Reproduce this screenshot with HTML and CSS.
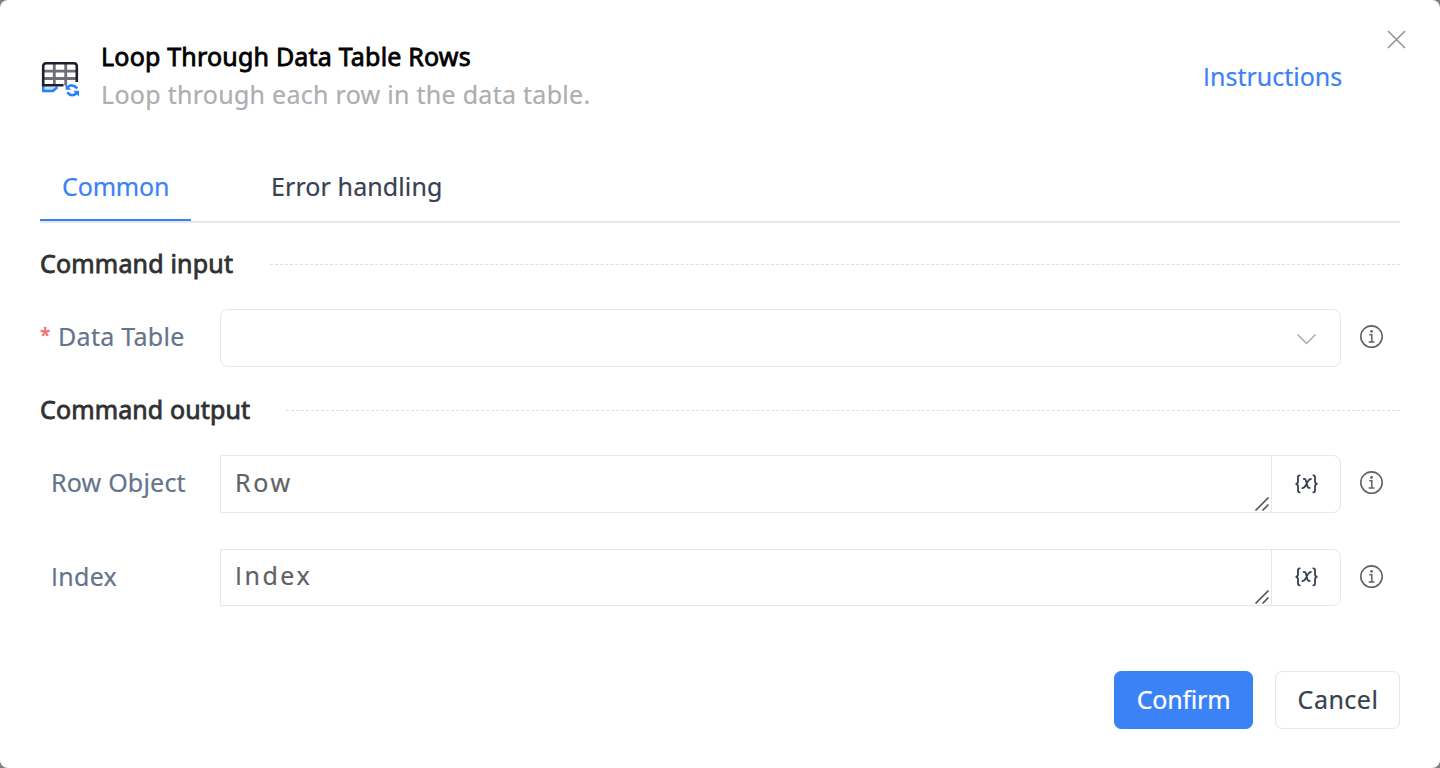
FILE: index.html
```html
<!DOCTYPE html>
<html lang="en">
<head>
<meta charset="utf-8">
<title>Loop Through Data Table Rows</title>
<link rel="stylesheet" href="styles.css">
</head>
<body>
<svg class="defs" width="0" height="0">
  <symbol id="info" viewBox="0 0 24 24"><circle cx="11.5" cy="11.6" r="10.7" fill="none" stroke="#606266" stroke-width="1.6"/><circle cx="11.5" cy="6.4" r="1.4" fill="#606266"/><path d="M9.3 9.8h2.5v7M8.7 16.9h5.8" fill="none" stroke="#606266" stroke-width="1.5"/></symbol>
  <symbol id="var" viewBox="0 0 24 20"><g fill="none" stroke="#374151" stroke-width="1.8"><path d="M6.4 1.3H5.6Q4 1.3 4 3V7.3Q4 9.6 1.6 9.8Q4 10 4 12.3V16.6Q4 18.3 5.6 18.3H6.4"/><path d="M18.6 1.3h.8Q21 1.3 21 3V7.3Q21 9.6 23.4 9.8Q21 10 21 12.3V16.6Q21 18.3 19.4 18.3H18.6"/><path d="M9 5.2Q11.2 4.3 12 6.7L13.3 12Q14 14.8 16.4 13.6M17.6 5.1Q15.4 4.6 13.8 7.4L11.5 11.8Q9.9 14.7 7.7 13.9"/></g></symbol>
  <symbol id="grip" viewBox="0 0 16 16"><path d="M1.5 14.5L14.5 1.5M8.5 14.5L14.5 8.5" fill="none" stroke="#505050" stroke-width="1.6"/></symbol>
</svg>
<main class="dialog">
  <header class="header">
    <svg class="logo" viewBox="0 0 40 40">
      <path d="M3.2 27V32H13L17.5 28" fill="#b9dcff" stroke="#2680ff" stroke-width="2.4"/>
      <path d="M3 12.2H37M3 19.5H37M14.3 5V26.5M25.7 5V26.5" stroke="#716d78" stroke-width="2.8" fill="none"/>
      <path d="M23.5 26.3H3.2V7.3Q3.2 4.3 6.2 4.3H33.8Q36.8 4.3 36.8 7.3V23" fill="none" stroke="#201d2e" stroke-width="2.6"/>
      <path d="M27.5 28.2Q32.5 24 37.3 29.4M37 33.8Q32 38.9 27.3 33.4" fill="none" stroke="#2680ff" stroke-width="2.7"/>
      <path d="M25.6 25.2V30.8H31.2ZM39 37.6V31.8H33.2Z" fill="#2680ff"/>
    </svg>
    <div class="heading">
      <h1 class="title">Loop Through Data Table Rows</h1>
      <p class="subtitle">Loop through each row in the data table.</p>
    </div>
    <a class="instructions">Instructions</a>
    <svg class="close" viewBox="0 0 20 20"><path d="M2 2L19 19M19 2L2 19" stroke="#909399" stroke-width="1.6"/></svg>
  </header>
  <nav class="tabs">
    <div class="tab active"><span class="t-common">Common</span></div>
    <div class="tab"><span class="t-error">Error handling</span></div>
  </nav>
  <section class="group">
    <h2 class="legend first"><span class="t-legend">Command input</span><i class="rule"></i></h2>
    <div class="row">
      <label class="label"><b class="star">*</b><span class="t-data">Data Table</span></label>
      <div class="field select"><svg class="chevron" viewBox="0 0 20 12"><path d="M.5 1.5L9.5 10.5L18.5 1.5" fill="none" stroke="#a8abb2" stroke-width="1.5"/></svg></div>
      <svg class="info"><use href="#info"/></svg>
    </div>
  </section>
  <section class="group">
    <h2 class="legend"><span class="t-legend">Command output</span><i class="rule"></i></h2>
    <div class="row">
      <label class="label indent"><span class="t-row">Row Object</span></label>
      <div class="field"><div class="text"><span class="v-row">Row</span><svg class="grip"><use href="#grip"/></svg></div><div class="addon"><svg class="var"><use href="#var"/></svg></div></div>
      <svg class="info"><use href="#info"/></svg>
    </div>
    <div class="row second">
      <label class="label indent"><span class="t-index">Index</span></label>
      <div class="field"><div class="text"><span class="v-index">Index</span><svg class="grip"><use href="#grip"/></svg></div><div class="addon"><svg class="var"><use href="#var"/></svg></div></div>
      <svg class="info"><use href="#info"/></svg>
    </div>
  </section>
  <footer class="footer">
    <button class="btn primary">Confirm</button>
    <button class="btn cancel">Cancel</button>
  </footer>
</main>
</body>
</html>
```

FILE: styles.css
```css
* { box-sizing: border-box; }
body { margin: 0; background: #7f7f7f; font-family: "Noto Sans", sans-serif; font-size: 25px; line-height: 36px; color: #374151; -webkit-text-stroke: 0.2px; }
svg { display: block; flex: none; }
.defs { position: absolute; }
h1, h2, p { margin: 0; font-size: 25px; font-weight: 400; white-space: nowrap; }
.dialog { width: 1440px; height: 768px; padding: 0 40px; background: #fff; border-radius: 8px; display: flex; flex-direction: column; }
.header { height: 154px; flex: none; display: flex; align-items: flex-start; }
.logo { width: 40px; height: 40px; margin-top: 59px; }
.heading { margin: 38px 0 0 21px; width: 1102px; }
.title { color: #000; -webkit-text-stroke: 0.8px #000; height: 38px; letter-spacing: 0.2px; }
.subtitle { color: #adadb3; letter-spacing: 0.28px; }
.instructions { color: #3b82f6; margin-top: 58px; width: 184px; }
/* plain capital I, without slab serifs */
.instructions::first-letter, .t-index::first-letter, .v-index::first-letter { font-family: "Open Sans", sans-serif; }
.t-index, .v-index { display: block; }
.close { width: 20px; height: 20px; margin: 29px -6px 0 -1px; }
.tabs { height: 69px; flex: none; display: flex; gap: 58px; border-bottom: 2px solid #e4e7ed; }
.tab { height: 67px; padding: 14px 22px 0; white-space: nowrap; }
.active { color: #3b82f6; width: 151px; border-bottom: 2px solid #3b82f6; }
.t-common { letter-spacing: -0.15px; }
.t-error { letter-spacing: 0.1px; }
.group { flex: none; }
.legend { height: 88px; padding-bottom: 2px; display: flex; align-items: center; gap: 36px; color: #303133; -webkit-text-stroke: 0.8px #303133; }
.first { height: 86px; padding-bottom: 3px; gap: 37px; }
.t-legend { letter-spacing: 0.12px; padding-bottom: 2px; }
.first .t-legend { padding-bottom: 3px; letter-spacing: 0.18px; }
.rule { flex: 1; height: 0; border-top: 1px dashed #dcdfe6; }
.row { display: flex; height: 58px; align-items: center; }
.second { margin-top: 36px; height: 57px; }
.label { width: 180px; display: flex; padding-bottom: 5px; color: #64748b; white-space: nowrap; }
.star { width: 18px; margin-top: -1px; color: #f56c6c; font-weight: 600; font-size: 19px; }
.indent { padding: 0 0 4px 11px; }
.t-data { letter-spacing: 0.3px; }
.t-row { letter-spacing: 0.2px; }
.t-index { letter-spacing: 0.3px; }
.field { width: 1121px; height: 100%; border: 1px solid #e4e7ed; border-radius: 0 8px 8px 0; display: flex; }
.select { border-radius: 8px; justify-content: flex-end; align-items: center; padding-right: 24px; }
.chevron { width: 20px; height: 12px; margin: 2px -1px 0 0; }
.text { flex: 1; padding: 8px 1px 0 14px; display: flex; justify-content: space-between; color: #606266; }
.v-row { letter-spacing: 2.7px; }
.v-index { letter-spacing: 2.5px; }
.grip { width: 16px; height: 16px; margin-top: 32px; }
.second .text { padding-top: 7px; }
.addon { width: 69px; border-left: 1px solid #e4e7ed; display: flex; align-items: center; justify-content: center; }
.var { width: 24px; height: 20px; margin-top: -1px; }
.info { width: 24px; height: 24px; margin: -2px 0 0 19px; }
.second .info { margin-top: -1px; }
.footer { margin-top: 65px; display: flex; justify-content: flex-end; gap: 22px; }
.btn { height: 58px; font: 25px/36px "Noto Sans", sans-serif; border-radius: 7px; padding: 0 0 2px; border: 1px solid #e4e7ed; background: #fff; color: #374151; }
.primary { width: 139px; background: #3b82f6; border-color: #3b82f6; color: #fff; letter-spacing: -0.2px; }
.cancel { width: 125px; letter-spacing: 0.5px; padding-left: 1px; }
```
